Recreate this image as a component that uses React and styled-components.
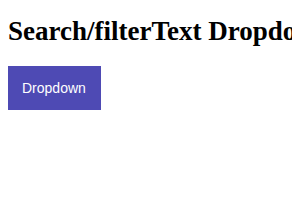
import styled, { createGlobalStyle } from 'styled-components';

const Global = createGlobalStyle`
  body {
    margin: 8px;
    background: #fff;
    font-family: "Liberation Serif", "Times New Roman", serif;
    overflow: hidden;
  }
`;

const Title = styled.h2`
  font-family: "Liberation Serif", "Times New Roman", serif;
  font-size: 27px;
  font-weight: bold;
  white-space: nowrap;
  margin: 8px 0 19px;
  color: #000;
`;

const DropButton = styled.button`
  font-family: "Liberation Sans", Arial, sans-serif;
  font-size: 14px;
  color: #fff;
  background: #4e4ab4;
  border: none;
  padding: 14px 15px;
  margin-left: -1px;
  cursor: pointer;
`;

export default function App() {
  return (
    <>
      <Global />
      <Title>Search/filterText Dropdown</Title>
      <DropButton>Dropdown</DropButton>
    </>
  );
}
